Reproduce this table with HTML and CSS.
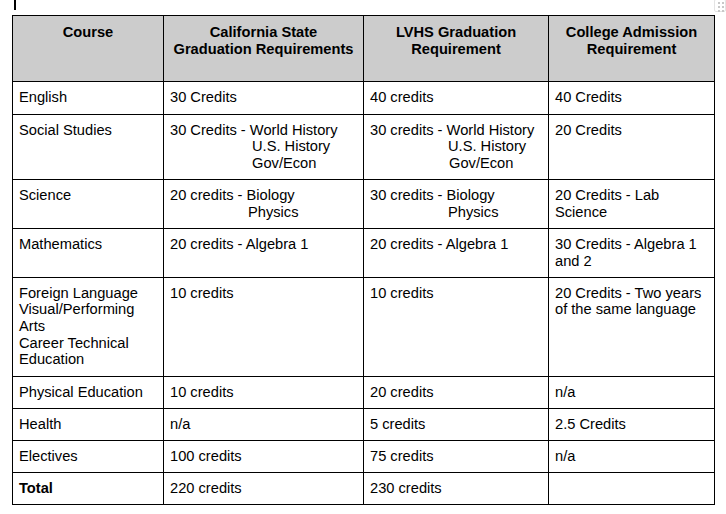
FILE: index.html
```html
<!DOCTYPE html>
<html>
<head>
<meta charset="utf-8">
<link rel="stylesheet" href="styles.css">
</head>
<body>
<div class="page">
  <span class="caret"></span>
  <div class="handle"><i></i><i></i><i></i><i></i><i></i><i></i></div>
  <table class="req">
    <colgroup>
      <col class="c1"><col class="c2"><col class="c3"><col class="c4">
    </colgroup>
    <tr class="head">
      <th>Course</th>
      <th>California State<br>Graduation Requirements</th>
      <th>LVHS Graduation<br>Requirement</th>
      <th>College Admission<br>Requirement</th>
    </tr>
    <tr>
      <td>English</td>
      <td>30 Credits</td>
      <td>40 credits</td>
      <td>40 Credits</td>
    </tr>
    <tr>
      <td>Social Studies</td>
      <td>30 Credits - World History<div class="ind ind-82">U.S. History</div><div class="ind ind-82">Gov/Econ</div></td>
      <td>30 credits - World History<div class="ind ind-78">U.S. History</div><div class="ind ind-79">Gov/Econ</div></td>
      <td>20 Credits</td>
    </tr>
    <tr>
      <td>Science</td>
      <td>20 credits - Biology<div class="ind ind-78">Physics</div></td>
      <td>30 credits - Biology<div class="ind ind-78">Physics</div></td>
      <td>20 Credits - Lab<br>Science</td>
    </tr>
    <tr>
      <td>Mathematics</td>
      <td>20 credits - Algebra 1</td>
      <td>20 credits - Algebra 1</td>
      <td>30 Credits - Algebra 1<br>and 2</td>
    </tr>
    <tr>
      <td>Foreign Language<br>Visual/Performing<br>Arts<br>Career Technical<br>Education</td>
      <td>10 credits</td>
      <td>10 credits</td>
      <td>20 Credits - Two years<br>of the same language</td>
    </tr>
    <tr>
      <td>Physical Education</td>
      <td>10 credits</td>
      <td>20 credits</td>
      <td>n/a</td>
    </tr>
    <tr>
      <td>Health</td>
      <td>n/a</td>
      <td>5 credits</td>
      <td>2.5 Credits</td>
    </tr>
    <tr>
      <td>Electives</td>
      <td>100 credits</td>
      <td>75 credits</td>
      <td>n/a</td>
    </tr>
    <tr>
      <td class="bold">Total</td>
      <td>220 credits</td>
      <td>230 credits</td>
      <td></td>
    </tr>
  </table>
</div>
</body>
</html>
```

FILE: styles.css
```css
html, body {
  margin: 0;
  padding: 0;
  background: #ffffff;
}
.page {
  position: relative;
  padding: 15px 0 0 12px;
  font-family: "Liberation Sans", Arial, sans-serif;
  font-size: 14.667px;
  line-height: 16.67px;
  color: #000;
}
.caret {
  position: absolute;
  left: 14px;
  top: 0;
  width: 2px;
  height: 10px;
  background: #000;
}
.handle {
  position: absolute;
  left: 714px;
  top: -1px;
  width: 12px;
  height: 13px;
  box-sizing: border-box;
  border: 1px solid #e4e4e4;
  border-radius: 2px;
  background: #fff;
  display: grid;
  grid-template-columns: 2px 2px;
  grid-auto-rows: 2px;
  column-gap: 2px;
  row-gap: 2px;
  padding: 2px 0 0 3px;
}
.handle i {
  display: block;
  background: #c8c8c8;
}
.req {
  border-collapse: collapse;
  table-layout: fixed;
  width: 702px;
}
.c1 { width: 151px; }
.c2 { width: 200px; }
.c3 { width: 185px; }
.c4 { width: 166px; }
.req th, .req td {
  border: 1px solid #000;
  vertical-align: top;
  padding: 7px 6px 7.5px 6px;
  text-align: left;
  font-weight: normal;
}
.req th {
  background: #cccccc;
  font-weight: bold;
  text-align: center;
  padding: 8px 6px 24px 6px;
}
.req td.bold { font-weight: bold; }
.ind-82 { padding-left: 82px; }
.ind-78 { padding-left: 78px; }
.ind-79 { padding-left: 79px; }
```
